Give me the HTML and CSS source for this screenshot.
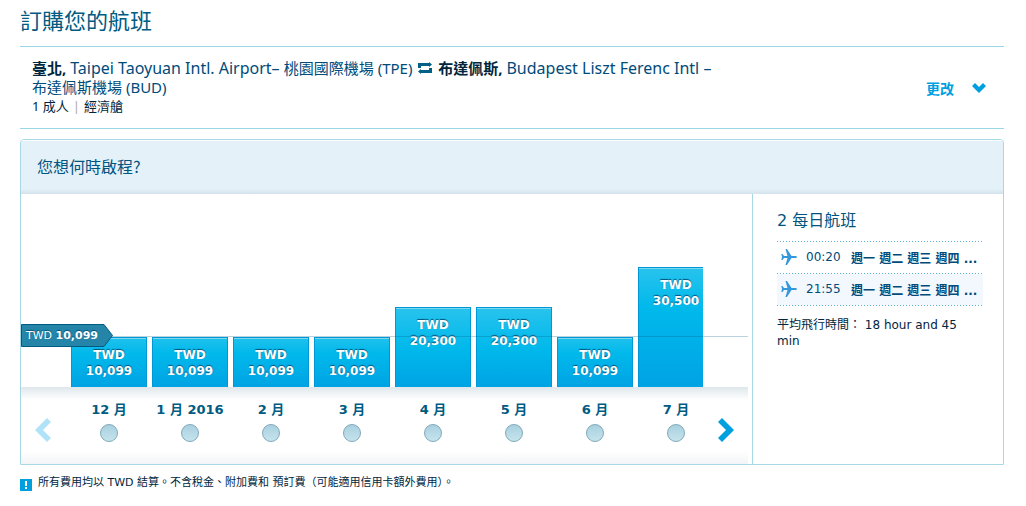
FILE: index.html
```html
<!DOCTYPE html>
<html lang="zh-Hant">
<head>
<meta charset="utf-8">
<meta name="viewport" content="width=device-width, initial-scale=1">
<title>訂購您的航班</title>
<link rel="stylesheet" href="styles.css">
</head>
<body>
<main class="page">
  <h1 class="page-title">訂購您的航班</h1>

  <section class="summary">
    <div class="route">
      <p class="route-line"><strong>臺北,</strong> <span class="latin">Taipei Taoyuan Intl. Airport– </span>桃園國際機場 (TPE)
        <svg class="swap" viewBox="0 0 14 12" aria-hidden="true"><path d="M0 6V1h11V0l3 2.500L11 5V4H3v2zM14 6v5H3v1L0 9.500 3 7v1h8V6z"/></svg>
        <strong>布達佩斯,</strong> <span class="latin">Budapest Liszt Ferenc Intl –</span></p>
      <p class="route-line">布達佩斯機場 (BUD)</p>
      <p class="travellers">1 成人<span class="bar-sep">|</span>經濟艙</p>
    </div>
    <button type="button" class="change">更改
      <svg class="chevron" viewBox="0 0 14 10" aria-hidden="true"><path d="M0 3l3-3 4 4 4-4 3 3-7 7z"/></svg>
    </button>
  </section>

  <section class="panel">
    <h2 class="panel-title">您想何時啟程?</h2>
    <div class="panel-body">
      <div class="chart">
        <div class="plot">
          <div class="viewport">
            <button type="button" class="fare low">TWD<br>10,099</button>
            <button type="button" class="fare low">TWD<br>10,099</button>
            <button type="button" class="fare low">TWD<br>10,099</button>
            <button type="button" class="fare low">TWD<br>10,099</button>
            <button type="button" class="fare mid">TWD<br>20,300</button>
            <button type="button" class="fare mid">TWD<br>20,300</button>
            <button type="button" class="fare low">TWD<br>10,099</button>
            <button type="button" class="fare high">TWD<br>30,500</button>
          </div>
          <div class="lowest-line"></div>
          <div class="lowest">
            <svg class="lowest-shape" viewBox="0 0 92 23" aria-hidden="true"><path d="M.5.5H83L91.500 11.500 83 22.500H.5z"/></svg>
            <span class="lowest-text">TWD <b>10,099</b></span>
          </div>
        </div>
        <div class="axis">
          <button type="button" class="nav prev" aria-label="上一頁"><svg viewBox="0 0 16 24" aria-hidden="true"><path d="M12 0l4 4-8 8 8 8-4 4L0 12z"/></svg></button>
          <div class="months">
            <label class="month">12 月<input type="radio" name="month"></label>
            <label class="month">1 月 2016<input type="radio" name="month"></label>
            <label class="month">2 月<input type="radio" name="month"></label>
            <label class="month">3 月<input type="radio" name="month"></label>
            <label class="month">4 月<input type="radio" name="month"></label>
            <label class="month">5 月<input type="radio" name="month"></label>
            <label class="month">6 月<input type="radio" name="month"></label>
            <label class="month">7 月<input type="radio" name="month"></label>
          </div>
          <button type="button" class="nav next" aria-label="下一頁"><svg viewBox="0 0 16 24" aria-hidden="true"><path d="M4 0L0 4l8 8-8 8 4 4 12-12z"/></svg></button>
        </div>
      </div>

      <aside class="flights">
        <h3 class="flights-title">2 每日航班</h3>
        <ul class="flight-list">
          <li class="flight"><svg class="plane" viewBox="0 0 16 16" aria-hidden="true"><path d="M16 8c0-.7-1-1.100-2-1.100h-3.500L6 0H4.500l2 6.900H3L1.500 5H.3L1 8 .3 11h1.200L3 9.100h3.500L4.500 16H6l4.500-6.900H14c1 0 2-.4 2-1.100z"/></svg><span class="time">00:20</span><span class="days">週一 週二 週三 週四 ...</span></li>
          <li class="flight"><svg class="plane" viewBox="0 0 16 16" aria-hidden="true"><path d="M16 8c0-.7-1-1.100-2-1.100h-3.500L6 0H4.500l2 6.900H3L1.500 5H.3L1 8 .3 11h1.200L3 9.100h3.500L4.500 16H6l4.500-6.900H14c1 0 2-.4 2-1.100z"/></svg><span class="time">21:55</span><span class="days">週一 週二 週三 週四 ...</span></li>
        </ul>
        <p class="duration">平均飛行時間： 18 hour and 45 min</p>
      </aside>
    </div>
  </section>

  <p class="note"><svg class="note-icon" viewBox="0 0 12 12" aria-hidden="true"><path class="note-bg" d="M0 0h12v12H0z"/><path class="note-mark" d="M5 2h2v5H5zM5 8h2v2H5z"/></svg><span>所有費用均以 TWD 結算。不含稅金、附加費和 預訂費（可能適用信用卡額外費用）。</span></p>
</main>
</body>
</html>
```
FILE: styles.css
```css
* { box-sizing: border-box; }
body {
  margin: 0;
  background: #fff;
  color: #00263e;
  font-family: "DejaVu Sans", "Noto Sans CJK TC", sans-serif;
  font-size: 12px;
}
h1, h2, h3, p, ul { margin: 0; padding: 0; font-weight: 400; }
button {
  margin: 0;
  padding: 0;
  border: 0;
  background: none;
  font: inherit;
  cursor: pointer;
}
svg { display: block; }

.page { padding: 0 22px 0 20px; }
.page-title {
  padding: 3px 0 11px;
  color: #005b82;
  font: 22px/32px "Noto Sans CJK TC", sans-serif;
}

.summary {
  display: flex;
  align-items: center;
  justify-content: space-between;
  min-height: 83px;
  padding: 0 18px 0 12px;
  border: solid #99d6e6;
  border-width: 1px 0;
}
.route {
  padding-bottom: 2px;
  font-family: "Noto Sans", "Noto Sans CJK TC", sans-serif;
}
.route-line { color: #004b7a; font-size: 15px; line-height: 19px; }
.route-line strong { color: #00263e; }
.latin { font-size: 16px; line-height: 16px; }
.swap {
  display: inline-block;
  width: 14px;
  height: 12px;
  margin: 0 2px;
  fill: #006085;
}
.travellers { font-size: 13px; line-height: 18px; }
.bar-sep { margin: 0 4px; color: #b5a9a9; }
.change {
  display: flex;
  align-items: center;
  gap: 18px;
  color: #009fe0;
  font: 700 14px/20px "Noto Sans CJK TC", sans-serif;
}
.chevron { width: 14px; height: 10px; fill: #009fe0; }

.panel {
  margin-top: 10px;
  overflow: hidden;
  border: 1px solid #a6d8e5;
  border-radius: 4px 4px 0 0;
}
.panel-title {
  height: 54px;
  padding: 0 16px;
  background: linear-gradient(#e4f1f9, #e4f1f9 48px, #d3e3eb);
  border-top: 1px solid #fff;
  color: #005480;
  font: 16px/50px "Noto Sans CJK TC", sans-serif;
}
.panel-body { display: flex; }

.chart { flex: 1; min-width: 0; padding-right: 4px; }
.plot { position: relative; padding: 0 45px 0 50px; }
.viewport {
  display: flex;
  align-items: flex-end;
  gap: 5px;
  height: 193px;
  overflow: hidden;
}
.fare {
  display: flex;
  flex: none;
  justify-content: center;
  width: 76px;
  padding-top: 9px;
  border: 1px solid #0098d4;
  border-bottom: 0;
  background: linear-gradient(#28c3ed, #00b9eb 40px, #00a3e4);
  box-shadow: inset 0 1px #7ad8f2;
  color: #fff;
  font-size: 12px;
  font-weight: 700;
  line-height: 16px;
  text-shadow: 0 -1px 1px #00517b;
}
.low { height: 50px; background: linear-gradient(#20c1ed, #00b9eb 15px, #00a3e4); }
.mid { height: 80px; }
.high { height: 120px; }
.lowest-line {
  position: absolute;
  right: 0;
  bottom: 50px;
  left: 0;
  height: 1px;
  background: #005b8244;
}
.lowest { position: absolute; bottom: 40px; left: 0; }
.lowest-shape { width: 92px; height: 23px; fill: #2585a8; stroke: #005b82; }
.lowest-text {
  position: absolute;
  inset: 0;
  padding-left: 5px;
  color: #fff;
  font-size: 11px;
  line-height: 23px;
  white-space: nowrap;
  text-shadow: 0 -1px 1px #00517b;
}

.axis {
  display: flex;
  height: 77px;
  background: linear-gradient(#dfe7eb, #fff 13px, #fff 64px, #f3f4f7);
}
.nav { flex: none; height: 24px; margin-top: 31px; }
.nav svg { width: 16px; height: 24px; }
.prev { margin: 31px 20px 0 14px; fill: #b0e3f7; }
.next { margin: 31px 14px 0 15px; fill: #009fe0; }
.months { display: flex; flex: 1; gap: 5px; min-width: 0; overflow: hidden; }
.month {
  display: flex;
  flex: none;
  flex-direction: column;
  align-items: center;
  gap: 4px;
  width: 76px;
  padding-top: 13px;
  color: #005b82;
  font-size: 13px;
  font-weight: 700;
  line-height: 20px;
  white-space: nowrap;
}
.month input {
  appearance: none;
  width: 18px;
  height: 18px;
  margin: 0;
  border: 1px solid #7fa9b8;
  border-radius: 50%;
  background: linear-gradient(#a9d0df, #c5e4ed);
}

.flights {
  flex: none;
  width: 251px;
  padding: 15px 20px 0 24px;
  border-left: 1px solid #a6d8e5;
}
.flights-title { color: #005480; font-size: 16px; line-height: 24px; }
.flight-list {
  margin-top: 8px;
  padding-bottom: 1px;
  list-style: none;
  background: repeating-linear-gradient(90deg, #55b5d2 0 1px, #fff 1px 3px) bottom / 100% 1px no-repeat;
}
.flight {
  display: flex;
  align-items: center;
  height: 32px;
  padding-left: 4px;
  background: repeating-linear-gradient(90deg, #55b5d2 0 1px, #fff 1px 3px) top / 100% 1px no-repeat;
  color: #004b7a;
}
.flight:nth-child(even) { background-color: #f2f8fd; }
.plane { width: 16px; height: 16px; margin-right: 9px; fill: #3498db; }
.time { width: 45px; }
.days { overflow: hidden; font-weight: 700; white-space: nowrap; }
.duration { margin-top: 11px; line-height: 16px; }

.note {
  display: flex;
  align-items: flex-end;
  gap: 6px;
  margin-top: 10px;
  font-size: 11px;
  line-height: 16px;
}
.note-icon { flex: none; width: 12px; height: 12px; }
.note-bg { fill: #009fe0; }
.note-mark { fill: #fff; }
```
